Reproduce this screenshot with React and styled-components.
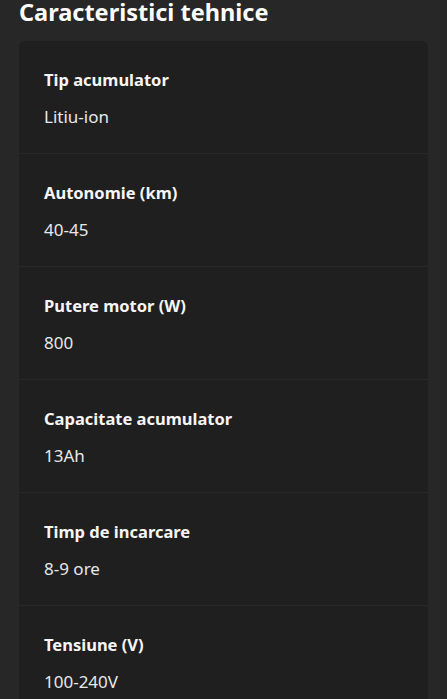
import React from 'react';
import styled, { createGlobalStyle } from 'styled-components';

const GlobalStyle = createGlobalStyle`
  html, body {
    margin: 0;
    padding: 0;
    background: #272727;
    font-family: 'Noto Sans', 'Open Sans', sans-serif;
    color: #f2f2f2;
  }
`;

const Page = styled.div`
  padding: 0 19px;
`;

const Title = styled.h2`
  margin: 0 0 17px;
  font-size: 23.5px;
  line-height: 24px;
  font-weight: 700;
  color: #ffffff;
`;

const SpecCard = styled.div`
  background: #1f1f1f;
  border-radius: 6px;
  overflow: hidden;
`;

const SpecRow = styled.div`
  padding: 27px 25px 24px;
  border-bottom: 1px solid ${(p) => (p.last ? 'transparent' : '#282828')};
`;

const SpecLabel = styled.div`
  font-size: 16.5px;
  line-height: 24px;
  font-weight: 700;
  color: #f5f5f5;
`;

const SpecValue = styled.div`
  margin-top: 13px;
  font-size: 17px;
  line-height: 24px;
  font-weight: 400;
  color: #e8e8e8;
`;

const specs = [
  { label: 'Tip acumulator', value: 'Litiu-ion' },
  { label: 'Autonomie (km)', value: '40-45' },
  { label: 'Putere motor (W)', value: '800' },
  { label: 'Capacitate acumulator', value: '13Ah' },
  { label: 'Timp de incarcare', value: '8-9 ore' },
  { label: 'Tensiune (V)', value: '100-240V' },
];

const App = () => {
  return (
    <Page>
      <GlobalStyle />
      <Title>Caracteristici tehnice</Title>
      <SpecCard>
        {specs.map((spec, index) => (
          <SpecRow key={index} last={index === specs.length - 1}>
            <SpecLabel>{spec.label}</SpecLabel>
            <SpecValue>{spec.value}</SpecValue>
          </SpecRow>
        ))}
      </SpecCard>
    </Page>
  );
};

export default App;
